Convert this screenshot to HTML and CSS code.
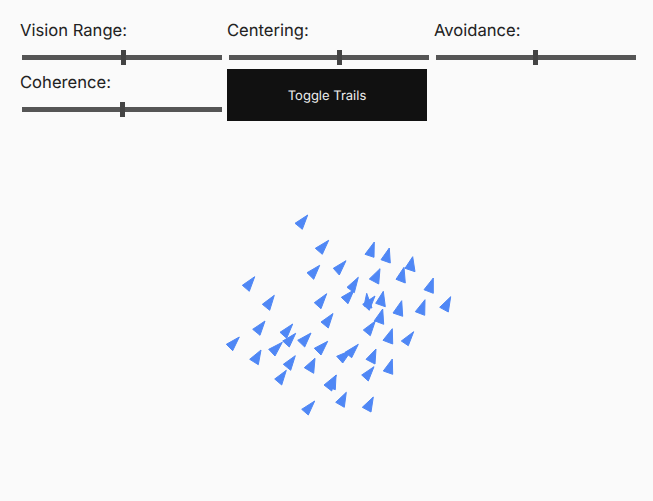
FILE: index.html
```html
<!DOCTYPE html>
<html>
<head>
  <title>Boids</title>
  <link rel="stylesheet" href="styles.css">
</head>
<body>
  <div class="controls">
    <div class="control">
      <label for="vision">Vision Range:</label>
      <input type="range" id="vision" min="0" max="1000" value="508">
    </div>
    <div class="control">
      <label for="centering">Centering:</label>
      <input type="range" id="centering" min="0" max="1000" value="554">
    </div>
    <div class="control">
      <label for="avoidance">Avoidance:</label>
      <input type="range" id="avoidance" min="0" max="1000" value="497">
    </div>
    <div class="control">
      <label for="coherence">Coherence:</label>
      <input type="range" id="coherence" min="0" max="1000" value="500">
    </div>
    <button class="toggle">Toggle Trails</button>
  </div>

  <svg class="flock" viewBox="0 121 653 380">
    <polygon points="307.7,215 295,223.3 302.3,229.3"/>
    <polygon points="328.7,240.3 315.3,248.3 322.3,254.3"/>
    <polygon points="319.7,265.3 307,272.7 313.7,279.3"/>
    <polygon points="254.7,276.7 242.3,285.3 249.3,291.3"/>
    <polygon points="274.3,295.3 262.3,304.3 269.7,310.3"/>
    <polygon points="326.7,293.7 314.3,302.7 321,308.7"/>
    <polygon points="374.3,242 365,254.3 374,257.3"/>
    <polygon points="389.3,248 381,259.7 390.3,263"/>
    <polygon points="412.7,256.7 405,268.3 415,271.7"/>
    <polygon points="380,268.7 369.3,279 378.7,284"/>
    <polygon points="404,267.3 396,279.3 405.3,283"/>
    <polygon points="433.3,278 424,289.7 433.3,293.3"/>
    <polygon points="358.3,277.3 347,287.3 354.3,292.7"/>
    <polygon points="354,290 341.3,297.3 348,303.7"/>
    <polygon points="366.7,293.3 364,306 372,308"/>
    <polygon points="375,296 362.7,304.3 369.3,310.3"/>
    <polygon points="383.3,291.3 375.7,303.3 385.3,306.7"/>
    <polygon points="401.7,300.7 393,313 402.7,316.3"/>
    <polygon points="425,299.7 415.3,311.7 424.7,315.3"/>
    <polygon points="450.7,296.7 439.7,307.3 448.3,312"/>
    <polygon points="382.7,309 374.3,320.7 383.7,324.3"/>
    <polygon points="375.3,321 363.3,330 370.3,335.7"/>
    <polygon points="392.3,328.7 383,340.3 392.7,344"/>
    <polygon points="413.7,331.7 401.3,341 408.3,345.7"/>
    <polygon points="346,260.7 333.3,268.3 339.3,275"/>
    <polygon points="265,321 252.7,329.3 260,335.3"/>
    <polygon points="292.7,324 280,332.3 286.7,338.3"/>
    <polygon points="295.7,333.3 282.7,341 289.3,347"/>
    <polygon points="311,333 297.7,340.3 304.7,347"/>
    <polygon points="282.3,342.3 268.7,349.3 275,356"/>
    <polygon points="327.7,341.3 314.3,348.3 321,355"/>
    <polygon points="239.3,337 226.3,344.3 232.7,350.7"/>
    <polygon points="261,350 249.7,359.3 258.3,364.7"/>
    <polygon points="295.3,355.7 283.3,364.3 290.7,370.3"/>
    <polygon points="315,358.3 304.3,367.7 313.7,373.3"/>
    <polygon points="286.3,370.3 274.7,379 281.7,385"/>
    <polygon points="336.3,375 324,385 331.7,391"/>
    <polygon points="336,375 327.3,386.7 335.3,389.7"/>
    <polygon points="314.7,401 301.7,409.3 308.3,415"/>
    <polygon points="333,313.5 321,322 328.3,328"/>
    <polygon points="358.3,344.3 345,352.3 351.7,357.7"/>
    <polygon points="351.7,350 336.7,356.3 342.7,363"/>
    <polygon points="376,349 366,359.3 375,364"/>
    <polygon points="392.3,359 383.3,371 392.7,374.3"/>
    <polygon points="374,366.7 361.7,375 368.3,381"/>
    <polygon points="346.3,392.3 335.7,402.3 344.3,407.3"/>
    <polygon points="373.3,397 362.3,407.3 371,412"/>
  </svg>
</body>
</html>
```
FILE: styles.css
```css
html, body {
  height: 100%;
}

body {
  margin: 0;
  overflow: hidden;
  background-color: #fafafa;
  font-family: Inter, sans-serif;
  text-rendering: geometricPrecision;
}

.controls {
  display: grid;
  grid-template-columns: repeat(3, 200px);
  grid-auto-rows: 52px;
  column-gap: 7px;
  padding: 17px 20px 0;
}

.control label {
  display: block;
  height: 26px;
  line-height: 28px;
  font-size: 16.6px;
  color: #222;
}

input[type="range"] {
  display: block;
  width: 200px;
  height: 15px;
  margin: 7px 0 0 2px;
  appearance: none;
  background: linear-gradient(#555, #555) center / 100% 5px no-repeat;
}

input[type="range"]::-webkit-slider-thumb {
  appearance: none;
  width: 5px;
  height: 15px;
  background-color: #444;
}

.toggle {
  padding: 2px 0 0;
  border: none;
  background-color: #111;
  color: #eee;
  font-family: Inter, sans-serif;
  font-size: 13px;
  text-rendering: geometricPrecision;
}

.flock {
  display: block;
  width: 653px;
  height: 380px;
  fill: #4f87f5;
  stroke: #4f87f5;
  stroke-width: 1;
  stroke-linejoin: miter;
}
```
